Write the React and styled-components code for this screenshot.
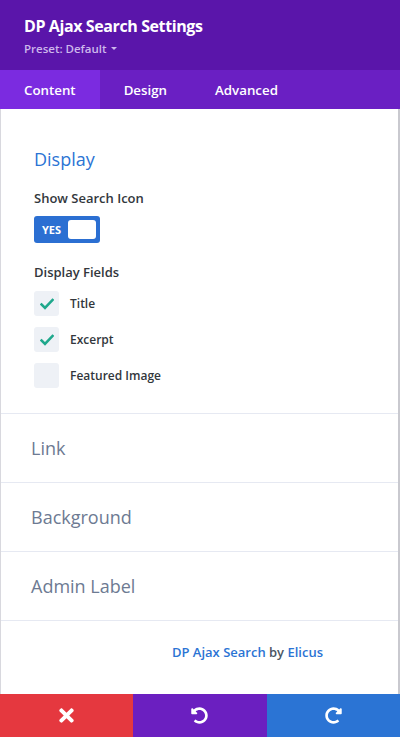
import React from 'react';
import styled, { createGlobalStyle } from 'styled-components';
import { FaTimes, FaUndoAlt, FaRedoAlt } from 'react-icons/fa';

const GlobalStyle = createGlobalStyle`
	html, body {
		margin: 0;
		padding: 0;
		background: #fff;
	}
	body {
		font-family: 'Open Sans', 'Liberation Sans', sans-serif;
		-webkit-font-smoothing: antialiased;
	}
`;

const fields = [
	{ label: 'Title', checked: true },
	{ label: 'Excerpt', checked: true },
	{ label: 'Featured Image', checked: false },
];

const toggles = ['Link', 'Background', 'Admin Label'];

const Check = () => (
	<svg width="14" height="12" viewBox="0 0 14 12">
		<path
			d="M1.5 6.5 L5 10 L12.5 2"
			fill="none"
			stroke="#1fa88c"
			strokeWidth="2.6"
			strokeLinecap="square"
		/>
	</svg>
);

export default function App() {
	return (
		<>
			<GlobalStyle />
			<Modal>
				<Header>
					<Title>DP Ajax Search Settings</Title>
					<Preset>
						Preset: Default <Caret />
					</Preset>
				</Header>
				<Tabs>
					<Tab active>Content</Tab>
					<Tab>Design</Tab>
					<Tab>Advanced</Tab>
				</Tabs>
				<Body>
					<Section>
						<SectionTitle>Display</SectionTitle>
						<FieldLabel>Show Search Icon</FieldLabel>
						<Toggle>
							<span>YES</span>
							<Knob />
						</Toggle>
						<FieldLabel second>Display Fields</FieldLabel>
						<CheckList>
							{fields.map((f) => (
								<CheckRow key={f.label}>
									<Box>{f.checked && <Check />}</Box>
									<CheckText>{f.label}</CheckText>
								</CheckRow>
							))}
						</CheckList>
					</Section>
					{toggles.map((t) => (
						<Closed key={t}>{t}</Closed>
					))}
					<Credit>
						<a>DP Ajax Search</a> by <a>Elicus</a>
					</Credit>
				</Body>
				<Actions>
					<ActionButton color="#e5383f">
						<FaTimes size={21} />
					</ActionButton>
					<ActionButton color="#6b1fc0">
						<FaUndoAlt size={17} />
					</ActionButton>
					<ActionButton color="#2b74d4">
						<FaRedoAlt size={17} />
					</ActionButton>
				</Actions>
			</Modal>
		</>
	);
}

const Modal = styled.div`
	width: 400px;
	height: 737px;
	display: flex;
	flex-direction: column;
	overflow: hidden;
`;

const Header = styled.div`
	height: 70px;
	box-sizing: border-box;
	background: #5a15aa;
	padding: 16px 0 0 24px;
	color: #fff;
`;

const Title = styled.div`
	font-size: 16px;
	font-weight: 700;
	letter-spacing: -0.4px;
	line-height: 20px;
`;

const Preset = styled.div`
	margin-top: 5px;
	font-size: 11.5px;
	font-weight: 600;
	color: #cdb8ec;
	display: flex;
	align-items: center;
	gap: 4px;
`;

const Caret = styled.span`
	width: 0;
	height: 0;
	border-left: 3px solid transparent;
	border-right: 3px solid transparent;
	border-top: 3px solid #cdb8ec;
`;

const Tabs = styled.div`
	height: 39px;
	display: flex;
	background: #6a1fc3;
`;

const Tab = styled.div`
	display: flex;
	align-items: center;
	padding: 0 24px;
	font-size: 13.3px;
	font-weight: 600;
	color: #fff;
	background: ${(p) => (p.active ? '#7b2be0' : 'transparent')};
`;

const Body = styled.div`
	flex: 1;
	display: flex;
	flex-direction: column;
	border-left: 1px solid #d8d8de;
	border-right: 2px solid #c9c9cf;
`;

const Section = styled.div`
	padding: 38px 33px 25px;
	border-bottom: 1px solid #e6e9f2;
`;

const SectionTitle = styled.div`
	font-size: 18px;
	line-height: 24px;
	color: #2b74d4;
`;

const FieldLabel = styled.div`
	margin-top: ${(p) => (p.second ? '20px' : '18px')};
	font-size: 13px;
	font-weight: 600;
	line-height: 18px;
	color: #32373c;
`;

const Toggle = styled.div`
	margin-top: 9px;
	width: 66px;
	height: 27px;
	box-sizing: border-box;
	background: #2b6fd2;
	border-radius: 3px;
	display: flex;
	align-items: center;
	justify-content: space-between;
	padding: 0 4px 0 8px;
	span {
		font-size: 11px;
		font-weight: 700;
		color: #fff;
	}
`;

const Knob = styled.div`
	width: 28px;
	height: 19px;
	background: #fff;
	border-radius: 3px;
`;

const CheckList = styled.div`
	margin-top: 10px;
	display: flex;
	flex-direction: column;
	gap: 11px;
`;

const CheckRow = styled.div`
	display: flex;
	align-items: center;
	gap: 11px;
`;

const Box = styled.div`
	width: 25px;
	height: 25px;
	border-radius: 3px;
	background: #eef1f6;
	display: flex;
	align-items: center;
	justify-content: center;
`;

const CheckText = styled.div`
	font-size: 12px;
	font-weight: 600;
	color: #32373c;
`;

const Closed = styled.div`
	height: 69px;
	box-sizing: border-box;
	border-bottom: 1px solid #e6e9f2;
	display: flex;
	align-items: center;
	padding-left: 30px;
	font-size: 18px;
	color: #6d7a92;
`;

const Credit = styled.div`
	flex: 1;
	display: flex;
	align-items: center;
	justify-content: flex-end;
	padding-right: 75px;
	padding-bottom: 12px;
	font-size: 13px;
	font-weight: 600;
	color: #4b5563;
	white-space: pre;
	a {
		color: #2b74d4;
	}
`;

const Actions = styled.div`
	height: 43px;
	display: flex;
`;

const ActionButton = styled.div`
	flex: 1;
	background: ${(p) => p.color};
	display: flex;
	align-items: center;
	justify-content: center;
	color: #fff;
`;
